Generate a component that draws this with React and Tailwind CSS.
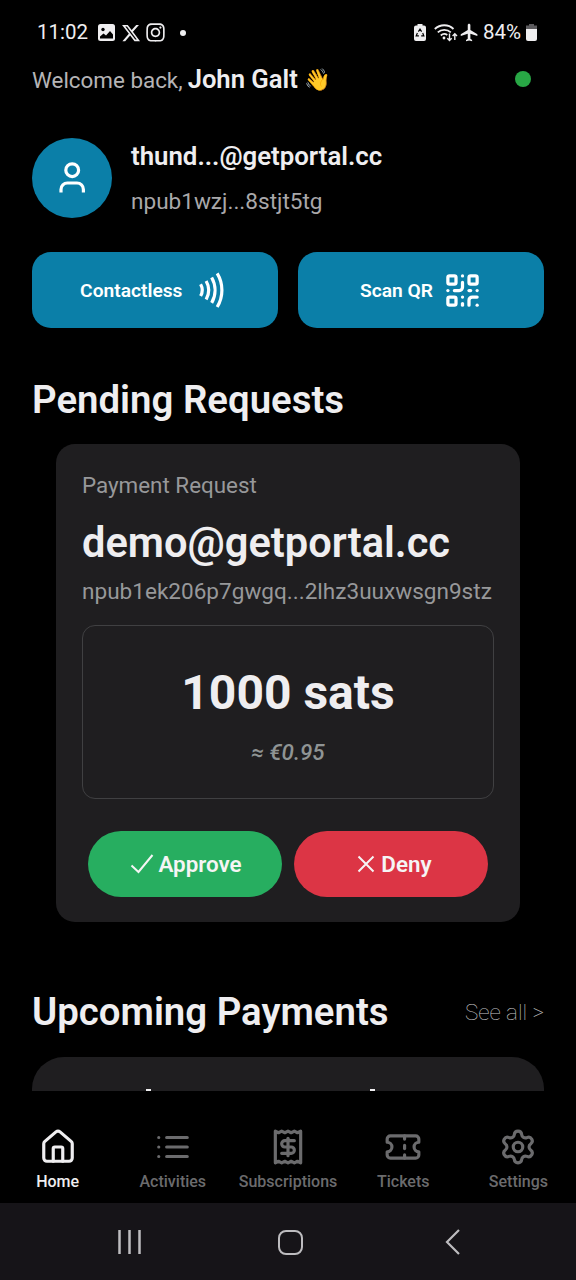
// src/App.jsx
import { House, QrCode, Settings, Ticket, User } from "lucide-react";
import { FaInstagram, FaXTwitter } from "react-icons/fa6";
import { MdFlight } from "react-icons/md";

const ListIcon = ({ className }) => (
  <svg className={className} viewBox="0 0 24 24" fill="none" stroke="currentColor" strokeWidth="2" strokeLinecap="round">
    <path d="M8 6h13M8 12h13M8 18h13M3 6h.01M3 12h.01M3 18h.01" />
  </svg>
);

const ReceiptIcon = ({ className }) => (
  <svg
    className={className}
    viewBox="0 0 24 24"
    fill="none"
    stroke="currentColor"
    strokeWidth="2"
    strokeLinecap="round"
    strokeLinejoin="round"
  >
    <path d="M4 2v20l2-1 2 1 2-1 2 1 2-1 2 1 2-1 2 1V2l-2 1-2-1-2 1-2-1-2 1-2-1-2 1Z" />
    <path d="M16 8h-6a2 2 0 1 0 0 4h4a2 2 0 1 1 0 4H8" />
    <path d="M12 17.5v-11" />
  </svg>
);

const ContactlessIcon = ({ className }) => (
  <svg className={className} viewBox="0 0 24 24" fill="none" stroke="currentColor" strokeWidth="2">
    <path d="M6 8.32a7.43 7.43 0 0 1 0 7.36" />
    <path d="M9.46 6.21a11.76 11.76 0 0 1 0 11.58" />
    <path d="M12.91 4.1a15.91 15.91 0 0 1 .01 15.8" />
    <path d="M16.37 1.5a20.16 20.16 0 0 1 0 21" />
  </svg>
);

const GalleryIcon = () => (
  <svg className="h-[17px] w-[17px]" viewBox="0 0 17 17">
    <rect width="17" height="17" rx="2.5" fill="#efeef0" />
    <circle cx="5" cy="5.5" r="1.7" fill="#000" />
    <path d="M2 14.5v-2l3.5-3 2.5 2 4-4.5 3 3.5v4z" fill="#000" />
  </svg>
);

const BatterySaverIcon = () => (
  <svg className="h-[17px] w-[12px]" viewBox="0 0 12 17">
    <path d="M3.5 0h5v1.5H10a2 2 0 0 1 2 2V15a2 2 0 0 1-2 2H2a2 2 0 0 1-2-2V3.5a2 2 0 0 1 2-2h1.5z" fill="#efeef0" />
    <path
      d="M4.4 7.6 6 5.2l1.6 2.4M8.7 9l1.1 2.8H7.2M4.9 11.8H2.2L3.4 9"
      fill="none"
      stroke="#000"
      strokeWidth="1.2"
    />
  </svg>
);

const WifiIcon = () => (
  <svg className="h-[18px] w-[24px]" viewBox="0 0 24 18" fill="none" stroke="#efeef0" strokeWidth="1.8">
    <path d="M.8 5C6 0 14.5 0 19.5 5" />
    <path d="M3.8 8.3c3.5-3.3 9.5-3.3 13 0" />
    <path d="M6.8 11.5c2-1.9 4.5-1.9 6.5-.5" />
    <circle cx="10" cy="14" r="1.4" fill="#efeef0" stroke="none" />
    <path d="M15.5 9.5v7M13.3 14.3l2.2 2.3 2.2-2.3M20.8 16v-6M18.6 12l2.2-2.3L23 12" strokeWidth="1.4" />
  </svg>
);

const BatteryIcon = () => (
  <svg className="h-[17px] w-[11px]" viewBox="0 0 11 17">
    <path d="M3 0h5v1.5h3V5H0V1.5h3z" fill="#5c5b5e" />
    <path d="M0 5h11v10a2 2 0 0 1-2 2H2a2 2 0 0 1-2-2z" fill="#efeef0" />
  </svg>
);

const tabs = [
  { label: "Home", Icon: House, active: true },
  { label: "Activities", Icon: ListIcon },
  { label: "Subscriptions", Icon: ReceiptIcon },
  { label: "Tickets", Icon: Ticket },
  { label: "Settings", Icon: Settings },
];

function StatusBar() {
  return (
    <div className="flex h-16 items-center justify-between pt-px pr-[39px] pl-[37px] text-[#efeef0]">
      <div className="flex items-center">
        <span className="w-[61px] text-[20.5px]">11:02</span>
        <GalleryIcon />
        <FaXTwitter className="ml-[6px] h-5 w-5" />
        <FaInstagram className="ml-1 h-[21px] w-[21px]" />
        <span className="ml-[14px] h-1.5 w-1.5 rounded-full bg-[#efeef0]" />
      </div>
      <div className="flex items-center">
        <BatterySaverIcon />
        <span className="ml-2">
          <WifiIcon />
        </span>
        <MdFlight className="ml-px h-[21px] w-[21px]" />
        <span className="mr-[5px] ml-[3px] text-[20.5px]">84%</span>
        <BatteryIcon />
      </div>
    </div>
  );
}

function PendingRequest() {
  return (
    <div className="mx-6 mt-[19px] flex h-[478px] shrink-0 flex-col rounded-[19px] bg-[#1f1e20] px-[26px]">
      <p className="mt-[25px] text-[22.4px] leading-8 text-[#97989a]">Payment Request</p>
      <p className="mt-[17px] text-[41.6px] leading-[50px] font-semibold text-[#efeef0]">demo@getportal.cc</p>
      <p className="mt-2 text-[22.57px] leading-8 whitespace-nowrap text-[#97989a]">
        npub1ek206p7gwgq...2lhz3uuxwsgn9stz
      </p>
      <div className="mt-[17px] flex h-[174px] flex-col items-center rounded-[13px] border border-[#404042]">
        <p className="mt-[38px] text-[48px] leading-[58px] font-bold text-[#efeef0]">1000 sats</p>
        <p className="mt-[14px] text-[22.4px] leading-8 font-medium text-[#8f9494] italic">≈ €0.95</p>
      </div>
      <div className="mt-8 flex gap-3 px-1.5 text-[22.4px] font-semibold text-[#f5f5f5]">
        <button className="flex h-[66px] w-[194px] items-center justify-center rounded-full bg-[#27ae60] pt-0.5 pl-0.5">
          <svg className="mr-1 -mt-0.5 h-6 w-6" viewBox="0 0 24 24" fill="none" stroke="currentColor" strokeWidth="2">
            <path d="m1.5 13.5 7 6.5L22.5 3" />
          </svg>
          Approve
        </button>
        <button className="flex h-[66px] w-[194px] items-center justify-center rounded-full bg-[#dc3545] pt-0.5 pl-[7px]">
          <svg className="mr-1.5 -mt-0.5 h-[18px] w-[18px]" viewBox="0 0 18 18" fill="none" stroke="currentColor" strokeWidth="2">
            <path d="m1.5 1.5 15 15M16.5 1.5l-15 15" />
          </svg>
          Deny
        </button>
      </div>
    </div>
  );
}

export default function App() {
  return (
    <div className="flex h-[1280px] w-[576px] flex-col overflow-hidden bg-black font-['Roboto',sans-serif]">
      <StatusBar />

      <main className="flex h-[1027px] shrink-0 flex-col overflow-hidden px-8">
        <div className="flex h-8 shrink-0 items-center justify-between pr-[13px]">
          <p className="flex items-center text-[22.4px] text-[#b5b4b6]">
            <span className="pt-0.5">Welcome back,</span>
            <span className="ml-[5px] pb-0.5 text-[25.6px] font-semibold text-[#efeef0]">John Galt</span>
            <span className="ml-[6px] text-[21.5px]">👋</span>
          </p>
          <span className="h-4 w-4 -translate-y-px rounded-full bg-[#28a745]" />
        </div>

        <div className="mt-[42px] flex shrink-0">
          <div className="flex h-20 w-20 items-center justify-center rounded-full bg-[#0b7fa8] text-white">
            <User className="h-[38.4px] w-[38.4px]" strokeLinecap="butt" />
          </div>
          <div className="ml-[19px]">
            <p className="text-[25.8px] leading-9 font-semibold text-[#efeef0]">thund...@getportal.cc</p>
            <p className="mt-3 text-[22.57px] leading-8 text-[#a9a8aa]">npub1wzj...8stjt5tg</p>
          </div>
        </div>

        <div className="mt-[34px] flex shrink-0 gap-5 text-[19.2px] font-semibold text-white">
          <button className="flex h-[76px] flex-1 items-center justify-center gap-[9px] rounded-[19px] bg-[#0b7fa8]">
            <span className="pt-0.5">Contactless</span>
            <ContactlessIcon className="h-[38.4px] w-[38.4px]" />
          </button>
          <button className="flex h-[76px] flex-1 items-center justify-center gap-[10px] rounded-[19px] bg-[#0b7fa8]">
            <span className="pt-0.5">Scan QR</span>
            <QrCode className="h-[39px] w-[39px]" />
          </button>
        </div>

        <h2 className="mt-[47px] text-[38.4px] leading-[50px] font-semibold text-[#efeef0]">Pending Requests</h2>
        <PendingRequest />

        <div className="mt-[65px] flex shrink-0 items-center justify-between">
          <h2 className="text-[38.4px] leading-[50px] font-semibold text-[#efeef0]">Upcoming Payments</h2>
          <span className="pt-0.5 text-[22.4px] font-thin text-[#c5c4c6]">See all &gt;</span>
        </div>
        {/* next card is cut off by the tab bar */}
        <div className="mt-5 flex h-[34px] shrink-0 items-end gap-[219px] rounded-t-[32px] bg-[#1f1e20] pl-[114px]">
          <span className="h-0.5 w-[5px] bg-[#efeef0]" />
          <span className="h-0.5 w-[5px] bg-[#efeef0]" />
        </div>
      </main>

      <nav className="flex h-28 shrink-0">
        {tabs.map(({ label, Icon, active }) => (
          <div
            key={label}
            className={`flex flex-1 flex-col items-center pt-[37px] ${active ? "text-[#efeef0]" : "text-[#6b6b6d]"}`}
          >
            <Icon className="h-[38px] w-[38px]" />
            <span className="mt-1.5 text-base leading-5 font-medium">{label}</span>
          </div>
        ))}
      </nav>

      <div className="flex h-[77px] shrink-0 items-center bg-[#161418] pt-px pl-[117px] text-[#bdbcbf]">
        <svg className="h-7 w-[26px]" viewBox="0 0 26 28" stroke="currentColor" strokeWidth="2.5">
          <path d="M2.5 2v24M12.5 2v24M22.5 2v24" />
        </svg>
        <span className="ml-[135px] h-[25px] w-[25px] rounded-lg border-2 border-current" />
        <svg className="ml-[142px] h-7 w-4" viewBox="0 0 16 28" fill="none" stroke="currentColor" strokeWidth="2.2">
          <path d="M14 2 2 14l12 12" />
        </svg>
      </div>
    </div>
  );
}
